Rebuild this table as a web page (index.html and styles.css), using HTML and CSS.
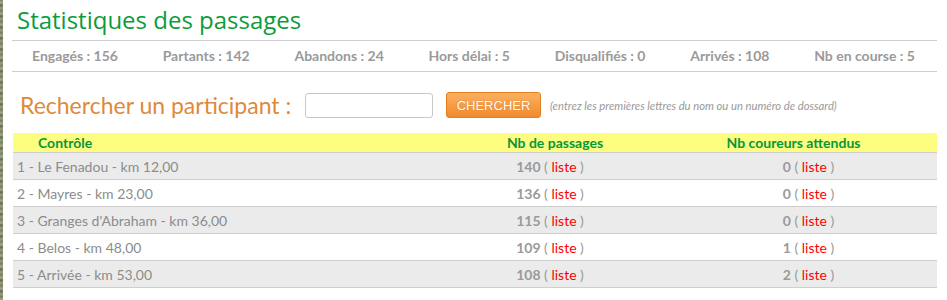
FILE: index.html
```html
<!DOCTYPE html>
<html lang="fr">
<head>
<meta charset="utf-8">
<title>Statistiques des passages</title>
<link rel="stylesheet" href="styles.css">
</head>
<body>
<div class="page">
  <h1 class="title">Statistiques des passages</h1>
  <ul class="stats">
    <li>Engagés : 156</li>
    <li>Partants : 142</li>
    <li>Abandons : 24</li>
    <li>Hors délai : 5</li>
    <li>Disqualifiés : 0</li>
    <li>Arrivés : 108</li>
    <li>Nb en course : 5</li>
  </ul>
  <form class="search">
    <label class="search-label" for="q">Rechercher un participant :</label>
    <input class="search-input" id="q" type="text">
    <button class="search-btn" type="button">CHERCHER</button>
    <span class="search-hint">(entrez les premières lettres du nom ou un numéro de dossard)</span>
  </form>
  <table class="ctrl">
    <colgroup>
      <col class="col1">
      <col class="col2">
      <col class="col3">
    </colgroup>
    <thead>
      <tr>
        <th class="c1">Contrôle</th>
        <th class="c2">Nb de passages</th>
        <th class="c3">Nb coureurs attendus</th>
      </tr>
    </thead>
    <tbody>
      <tr><td class="c1">1 - Le Fenadou - km 12,00</td><td class="c2"><b>140</b> ( <a href="#">liste</a> )</td><td class="c3"><b>0</b> ( <a href="#">liste</a> )</td></tr>
      <tr><td class="c1">2 - Mayres - km 23,00</td><td class="c2"><b>136</b> ( <a href="#">liste</a> )</td><td class="c3"><b>0</b> ( <a href="#">liste</a> )</td></tr>
      <tr><td class="c1">3 - Granges d'Abraham - km 36,00</td><td class="c2"><b>115</b> ( <a href="#">liste</a> )</td><td class="c3"><b>0</b> ( <a href="#">liste</a> )</td></tr>
      <tr><td class="c1">4 - Belos - km 48,00</td><td class="c2"><b>109</b> ( <a href="#">liste</a> )</td><td class="c3"><b>1</b> ( <a href="#">liste</a> )</td></tr>
      <tr><td class="c1">5 - Arrivée - km 53,00</td><td class="c2"><b>108</b> ( <a href="#">liste</a> )</td><td class="c3"><b>2</b> ( <a href="#">liste</a> )</td></tr>
    </tbody>
  </table>
</div>
</body>
</html>
```
FILE: styles.css
```css
html, body {
  margin: 0;
  padding: 0;
}
body {
  background: repeating-linear-gradient(180deg, #7d8a66 0px, #a8a890 3px, #5f6b4e 5px, #9aa082 8px, #6e7a5a 11px);
  font-family: Lato, "Open Sans", sans-serif;
  height: 300px;
  overflow: hidden;
}
.page {
  margin-left: 3px;
  background: #fff;
  height: 300px;
  padding: 0 10px 0 9px;
}
.title {
  margin: 0;
  height: 40px;
  line-height: 40px;
  padding-left: 5px;
  font-family: "Open Sans", sans-serif;
  font-weight: 400;
  font-size: 24px;
  color: #0b9c3c;
}
.stats {
  list-style: none;
  margin: 0;
  padding: 0 22px 0 20px;
  display: flex;
  justify-content: space-between;
  height: 30px;
  line-height: 30px;
  border-top: 1px solid #cfcfcf;
  border-bottom: 1px solid #cfcfcf;
  font-size: 14px;
  font-weight: 700;
  color: #9a9a9a;
}
.search {
  display: flex;
  align-items: center;
  padding: 20px 0 15px 8px;
  height: 26px;
}
.search-label {
  width: 285px;
  flex: none;
  font-size: 23px;
  color: #de8a3a;
}
.search-input {
  box-sizing: border-box;
  width: 128px;
  height: 25px;
  border: 1px solid #c8c8c8;
  border-radius: 3px;
  margin: 0;
}
.search-btn {
  box-sizing: border-box;
  margin-left: 13px;
  width: 95px;
  height: 26px;
  border: 1px solid #e0801e;
  border-radius: 3px;
  background: linear-gradient(#fbb062, #f28a2a);
  color: #fff;
  font-family: "Liberation Sans", Arial, sans-serif;
  font-size: 13px;
  text-shadow: 0 0 1px rgba(160, 80, 0, 0.6);
  padding: 0;
}
.search-hint {
  margin-left: 9px;
  font-size: 11.25px;
  font-style: italic;
  color: #999;
}
.ctrl {
  margin-left: 1px;
  width: 924px;
  border-collapse: collapse;
  table-layout: fixed;
  font-size: 14px;
}
.col1 { width: 457px; }
.col2 { width: 170px; }
.ctrl th {
  background: #fdfd80;
  color: #08963a;
  font-weight: 700;
  height: 19px;
  line-height: 19px;
  padding: 0;
  border-bottom: 1px solid #cfcfcf;
}
.ctrl td {
  height: 26px;
  padding: 0;
  border-bottom: 1px solid #cfcfcf;
  color: #999;
}
.ctrl tbody tr:nth-child(odd) td {
  background: #ebebeb;
}
.ctrl .c1 { text-align: left; }
.ctrl .c2 { text-align: center; }
.ctrl .c3 { text-align: center; }
.ctrl th.c1 { padding-left: 25px; }
.ctrl th.c3 { padding-left: 10px; }
.ctrl td.c1 { padding-left: 4px; color: #8c8c8c; }
.ctrl td.c2 { padding-right: 10px; }
.ctrl td.c3 { padding-left: 40px; }
.ctrl b { font-weight: 700; color: #9a9a9a; }
.ctrl a { color: #f00; text-decoration: none; }
```
